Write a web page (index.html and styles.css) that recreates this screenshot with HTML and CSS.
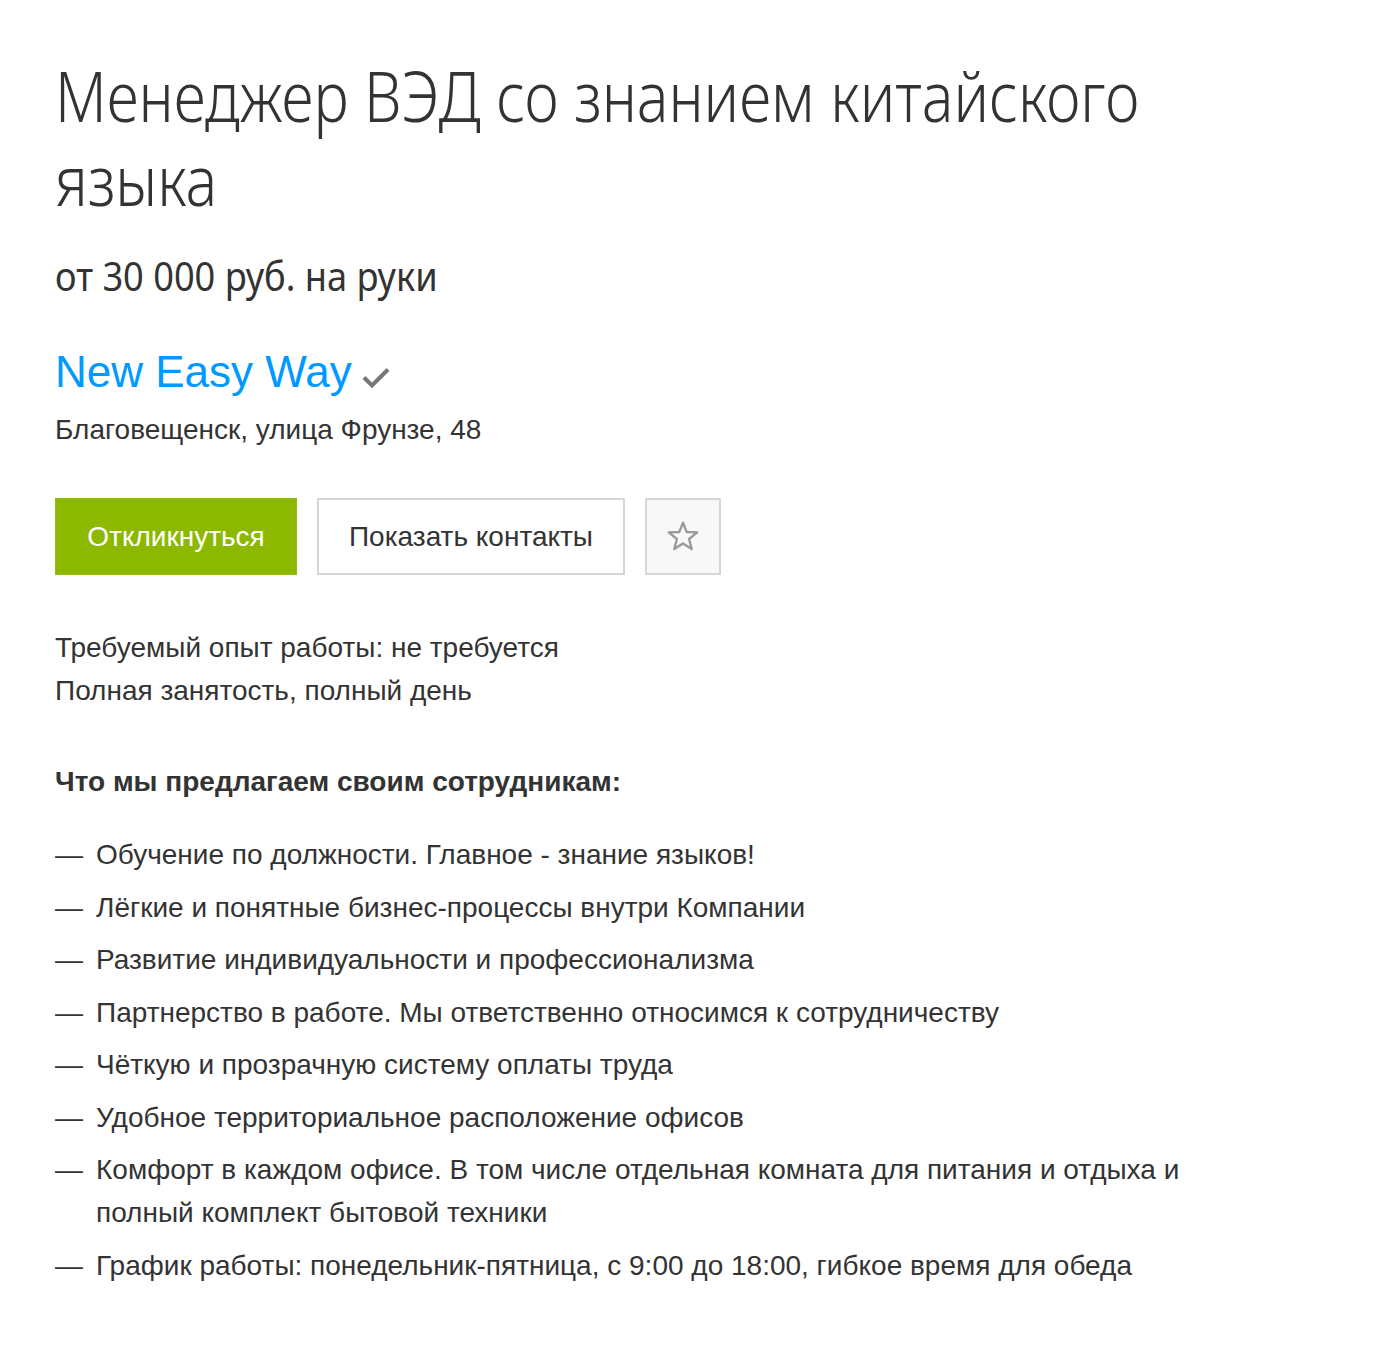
FILE: index.html
```html
<!DOCTYPE html>
<html lang="ru">
<head>
<meta charset="utf-8">
<title>Менеджер ВЭД со знанием китайского языка</title>
<link rel="stylesheet" href="styles.css">
</head>
<body>
<main class="vacancy">
  <h1 class="vacancy-title">Менеджер ВЭД со знанием китайского языка</h1>
  <p class="vacancy-salary"><span class="salary-text">от 30 000 руб. на руки</span></p>
  <div class="company">
    <a class="company-name" href="#">New Easy Way</a><svg class="company-check" width="30" height="24" viewBox="0 0 30 24" aria-hidden="true"><path d="M3 12.5 L11 20.5 L27 4.5" fill="none" stroke="#777" stroke-width="4"/></svg>
  </div>
  <p class="company-address">Благовещенск, улица Фрунзе, 48</p>
  <div class="actions">
    <button class="btn btn-primary" type="button">Откликнуться</button>
    <button class="btn btn-secondary" type="button">Показать контакты</button>
    <button class="btn btn-icon" type="button" aria-label="В избранное">
      <svg width="32" height="32" viewBox="0 0 30 30" aria-hidden="true"><polygon points="15,1.5 18.5,10.3 28.3,10.7 20.7,16.9 23.2,26.3 15,21 6.8,26.3 9.3,16.9 1.7,10.7 11.5,10.3" fill="none" stroke="#999" stroke-width="2.2" stroke-linejoin="round"/></svg>
    </button>
  </div>
  <div class="conditions">
    <p class="condition">Требуемый опыт работы: не требуется</p>
    <p class="condition">Полная занятость, полный день</p>
  </div>
  <h2 class="section-title">Что мы предлагаем своим сотрудникам:</h2>
  <ul class="offer-list">
    <li class="offer-item"><span class="offer-dash">—</span><span class="offer-text">Обучение по должности. Главное - знание языков!</span></li>
    <li class="offer-item"><span class="offer-dash">—</span><span class="offer-text">Лёгкие и понятные бизнес-процессы внутри Компании</span></li>
    <li class="offer-item"><span class="offer-dash">—</span><span class="offer-text">Развитие индивидуальности и профессионализма</span></li>
    <li class="offer-item"><span class="offer-dash">—</span><span class="offer-text">Партнерство в работе. Мы ответственно относимся к сотрудничеству</span></li>
    <li class="offer-item"><span class="offer-dash">—</span><span class="offer-text">Чёткую и прозрачную систему оплаты труда</span></li>
    <li class="offer-item"><span class="offer-dash">—</span><span class="offer-text">Удобное территориальное расположение офисов</span></li>
    <li class="offer-item"><span class="offer-dash">—</span><span class="offer-text">Комфорт в каждом офисе. В том числе отдельная комната для питания и отдыха и полный комплект бытовой техники</span></li>
    <li class="offer-item"><span class="offer-dash">—</span><span class="offer-text">График работы: понедельник-пятница, с 9:00 до 18:00, гибкое время для обеда</span></li>
  </ul>
</main>
</body>
</html>
```
FILE: styles.css
```css
html, body {
  margin: 0;
  padding: 0;
  background: #fff;
}

body {
  font-family: "Liberation Sans", Arial, sans-serif;
  font-size: 28px;
  line-height: 43px;
  color: #333;
}

.vacancy {
  width: 1175px;
  padding: 53px 55px 60px;
}

/* the original face is a light condensed sans; emulate it by narrowing Noto Sans Light */
.vacancy-title {
  margin: 0;
  width: 1387px;
  transform: scaleX(0.847);
  transform-origin: 0 0;
  font-family: "Noto Sans", "Open Sans", sans-serif;
  font-weight: 300;
  font-size: 70px;
  line-height: 84px;
  color: #333;
}

.vacancy-salary {
  margin: 29px 0 0;
  font-family: "Noto Sans", "Open Sans", sans-serif;
  font-weight: 400;
  font-size: 40px;
  line-height: 52px;
}

.salary-text {
  display: inline-block;
  transform: scaleX(0.905);
  transform-origin: 0 0;
}

.company {
  margin-top: 44px;
  font-size: 44px;
  line-height: 52px;
}

.company-name {
  color: #0099ff;
  text-decoration: none;
}

.company-check {
  margin-left: 9px;
  vertical-align: -2px;
}

.company-address {
  margin: 10px 0 0;
}

.actions {
  display: flex;
  gap: 20px;
  margin-top: 47px;
}

.btn {
  height: 77px;
  margin: 0;
  font-family: "Liberation Sans", Arial, sans-serif;
  font-size: 28px;
  line-height: 1;
  border-radius: 0;
  cursor: pointer;
  box-sizing: border-box;
  display: flex;
  align-items: center;
  justify-content: center;
}

.btn-primary {
  width: 242px;
  background: #8cb900;
  color: #fff;
  border: 1px solid #93be12;
}

.btn-secondary {
  width: 308px;
  background: #fff;
  color: #333;
  border: 2px solid #d2d7db;
}

.btn-icon {
  width: 76px;
  padding: 0;
  background: #f8f8f8;
  border: 2px solid #d2d7db;
}

.conditions {
  margin-top: 51px;
}

.condition {
  margin: 0;
}

.section-title {
  margin: 48px 0 0;
  font-size: 28px;
  line-height: 43px;
  font-weight: bold;
}

.offer-list {
  list-style: none;
  margin: 30px 0 0;
  padding: 0;
  display: flex;
  flex-direction: column;
  gap: 9.5px;
}

.offer-item {
  display: grid;
  grid-template-columns: 41px 1fr;
}
```
